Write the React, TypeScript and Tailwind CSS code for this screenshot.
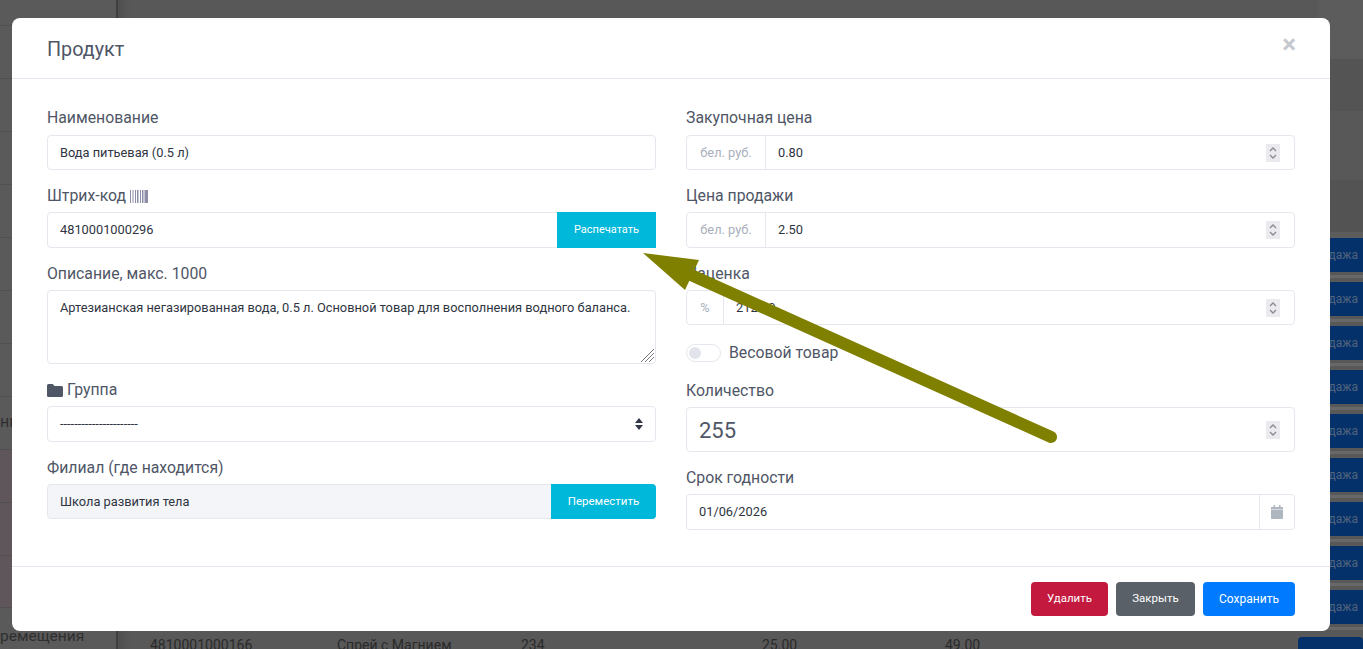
const sideLines = [26, 53, 53, 53, 53, 53, 53, 53, 53, 53, 53, 52];
const rightBands = [
  { h: 59, c: "bg-[#5c5c5c]" },
  { h: 52, c: "bg-[#545454]" },
  { h: 69, c: "bg-[#585858]" },
  { h: 52, c: "bg-[#535353]" },
];

function Label({ children }: { children: React.ReactNode }) {
  return <label className="block h-[18px] text-[15.8px] leading-[20px] text-[#4f5666]">{children}</label>;
}

function Stepper() {
  return (
    <span className="flex h-[18px] w-[14px] shrink-0 flex-col items-center justify-center gap-[2px] bg-[#eaeaef]">
      <svg width="8" height="5" viewBox="0 0 8 5" fill="none" stroke="#8a8a94" strokeWidth="1.3">
        <path d="M1 4l3-3 3 3" />
      </svg>
      <svg width="8" height="5" viewBox="0 0 8 5" fill="none" stroke="#8a8a94" strokeWidth="1.3">
        <path d="M1 1l3 3 3-3" />
      </svg>
    </span>
  );
}

function NumberField({ prefix, value, height, prefixWidth }: { prefix: string; value: string; height: string; prefixWidth: string }) {
  return (
    <div className={`flex ${height} items-center rounded border border-[#e4e7ed] text-[12.8px] text-[#2f3542]`}>
      <span className={`flex h-full ${prefixWidth} shrink-0 items-center justify-center border-r border-[#e4e7ed] text-[#a9b0bc]`}>{prefix}</span>
      <span className="flex-1 pl-3">{value}</span>
      <span className="pr-[14px]">
        <Stepper />
      </span>
    </div>
  );
}

export default function App() {
  return (
    <div className="relative h-[649px] w-[1363px] overflow-hidden bg-[#5a5a5a] font-['Roboto',sans-serif]">
      <div className="flex h-full">
        <aside className="h-full w-[118px] shrink-0 border-r-2 border-[#3f3f3f] bg-[#5a5a5a]">
          {sideLines.map((h, i) => (
            <div key={i} style={{ height: h }} className={`border-b border-[#505050] ${i > 8 ? "bg-[#5f565b]" : ""}`} />
          ))}
        </aside>
        <main className="flex-1 bg-gradient-to-r from-[#4f4f4f] via-[#585858] via-[1%] to-[#585858]">
          <div className="flex flex-col items-end">
            <div className="w-[45px]">
              {rightBands.map((b, i) => (
                <div key={i} style={{ height: b.h }} className={b.c} />
              ))}
              <div className="h-[6px] bg-[#5c5c5c]" />
            </div>
            {[0, 1, 2, 3, 4, 5, 6, 7, 8].map((i) => (
              <div key={i} className="h-[44px] w-[45px]">
                <div className="flex h-[34px] items-center bg-[#05316b] pl-[4px] text-[12px] text-[#52647c]">одажа</div>
                <div className="mt-[3px] h-[3px] bg-[#686868]" />
              </div>
            ))}
          </div>
        </main>
      </div>

      <span className="absolute left-0 top-[413px] text-[16px] leading-[18px] text-[#2f2f2f]">нг</span>
      <span className="absolute left-0 top-[627px] text-[15.5px] leading-[18px] text-[#2f2f2f]">ремещения</span>
      <div className="absolute left-[150px] top-[637px] flex text-[14px] leading-[16px] text-[#2a2a2a]">
        <span className="w-[187px]">4810001000166</span>
        <span className="w-[184px]">Спрей с Магнием</span>
        <span className="w-[241px]">234</span>
        <span className="w-[183px]">25.00</span>
        <span>49.00</span>
      </div>
      <div className="absolute left-[1298px] top-[637px] h-[12px] w-[65px] rounded-t bg-[#05316b]" />

      <section className="absolute left-[12px] top-[18px] h-[613px] w-[1318px] rounded-[8px] bg-white">
        <header className="flex h-[61px] items-start justify-between border-b border-[#e4e7ed] px-[35px] pt-[19px]">
          <h1 className="text-[19.8px] leading-[26px] text-[#4f5666]">Продукт</h1>
          <span className="mt-[-5px] translate-x-[1px] text-[26px] font-bold leading-[24px] text-[#c6c9d0]">×</span>
        </header>

        <div className="flex h-[487px] gap-[30px] px-[35px] pt-[29px]">
          <div className="w-[609px]">
            <Label>Наименование</Label>
            <div className="mt-[9px] flex h-[35px] items-center rounded border border-[#e4e7ed] px-3 text-[12.8px] text-[#2f3542]">Вода питьевая (0.5 л)</div>

            <div className="mt-[16px]">
              <Label>
                <span className="inline-flex items-center gap-[4px]">
                  Штрих-код
                  <svg width="18" height="13" viewBox="0 0 18 13" fill="#8d8fa8">
                    <path d="M0 0h1v13H0zM2.5 0h1v13h-1zM5 0h1v13H5zM7 0h1.5v13H7zM10 0h1v13h-1zM12 0h1.5v13H12zM14.5 0H18v13h-3.5z" />
                  </svg>
                </span>
              </Label>
            </div>
            <div className="mt-[8px] flex h-[36px] items-center rounded border border-[#e4e7ed] text-[12.8px] text-[#2f3542]">
              <span className="flex-1 pl-3">4810001000296</span>
              <button className="-mr-px h-[36px] w-[99px] bg-[#00b8d9] text-[11px] text-white">Распечатать</button>
            </div>

            <div className="mt-[16px]">
              <Label>Описание, макс. 1000</Label>
            </div>
            <div className="relative mt-[8px] h-[74px] rounded border border-[#e4e7ed] px-3 pt-[8px] text-[12.8px] leading-[18px] text-[#2f3542]">
              Артезианская негазированная вода, 0.5 л. Основной товар для восполнения водного баланса.
              <svg className="absolute bottom-[1px] right-[1px]" width="14" height="14" viewBox="0 0 14 14" stroke="#777" strokeWidth="1">
                <path d="M1 14L14 1M5 14l9-9M9 14l5-5" />
              </svg>
            </div>

            <div className="mt-[16px]">
              <Label>
                <span className="inline-flex items-center gap-[4px]">
                  <svg width="16" height="13" viewBox="0 0 16 13" fill="#4f5666">
                    <path d="M0 1.5A1.5 1.5 0 0 1 1.5 0h4.2L7.5 2h7A1.5 1.5 0 0 1 16 3.5v8a1.5 1.5 0 0 1-1.5 1.5h-13A1.5 1.5 0 0 1 0 11.5z" />
                  </svg>
                  Группа
                </span>
              </Label>
            </div>
            <div className="mt-[8px] flex h-[36px] items-center justify-between rounded border border-[#e4e7ed] pl-3 pr-[12px] text-[12.8px] text-[#2f3542]">
              <span>----------------------</span>
              <svg width="8" height="12" viewBox="0 0 8 12" fill="#333a45">
                <path d="M4 0l4 5H0zM4 12L0 7h8z" />
              </svg>
            </div>

            <div className="mt-[16px]">
              <Label>Филиал (где находится)</Label>
            </div>
            <div className="mt-[8px] flex h-[35px] items-center rounded border border-[#e4e7ed] bg-[#f4f5f8] text-[12.8px] text-[#2f3542]">
              <span className="flex-1 pl-3">Школа развития тела</span>
              <button className="-mr-px h-[35px] w-[105px] rounded-r bg-[#00b8d9] text-[11.5px] text-white">Переместить</button>
            </div>
          </div>

          <div className="w-[609px]">
            <Label>Закупочная цена</Label>
            <div className="mt-[9px]">
              <NumberField prefix="бел. руб." value="0.80" height="h-[35px]" prefixWidth="w-[79px]" />
            </div>
            <div className="mt-[16px]">
              <Label>Цена продажи</Label>
            </div>
            <div className="mt-[8px]">
              <NumberField prefix="бел. руб." value="2.50" height="h-[36px]" prefixWidth="w-[79px]" />
            </div>
            <div className="mt-[16px]">
              <Label>Наценка</Label>
            </div>
            <div className="mt-[8px]">
              <NumberField prefix="%" value="212.50" height="h-[35px]" prefixWidth="w-[37px]" />
            </div>
            <div className="mt-[19px] flex h-[18px] items-center gap-[8px]">
              <span className="flex h-[18px] w-[35px] items-center rounded-full border border-[#e4e7ed] pl-[2px]">
                <span className="h-[12px] w-[12px] rounded-full bg-[#e1e4ea]" />
              </span>
              <span className="text-[15.8px] leading-[20px] text-[#4f5666]">Весовой товар</span>
            </div>
            <div className="mt-[19px]">
              <Label>Количество</Label>
            </div>
            <div className="mt-[8px] flex h-[45px] items-center justify-between rounded border border-[#e4e7ed] pl-3 pr-[14px] text-[22px] text-[#4f5666]">
              <span className="pt-[2px]">255</span>
              <Stepper />
            </div>
            <div className="mt-[16px]">
              <Label>Срок годности</Label>
            </div>
            <div className="mt-[8px] flex h-[36px] items-center rounded border border-[#e4e7ed] text-[12.8px] text-[#2f3542]">
              <span className="flex-1 pl-3">01/06/2026</span>
              <span className="flex h-full w-[35px] items-center justify-center border-l border-[#e4e7ed]">
                <svg width="12" height="14" viewBox="0 0 12 14" fill="#aeb6c0">
                  <path d="M2.5 0h1.5v2H2.5zM8 0h1.5v2H8zM0 2h12v2.5H0zM0 5h12v8a1 1 0 0 1-1 1H1a1 1 0 0 1-1-1z" />
                </svg>
              </span>
            </div>
          </div>
        </div>

        <footer className="flex h-[65px] items-start justify-end gap-[8px] border-t border-[#e4e7ed] px-[35px] pt-[15px] text-[11.5px] text-white">
          <button className="h-[34px] w-[77px] rounded bg-[#c4193f]">Удалить</button>
          <button className="h-[34px] w-[79px] rounded bg-[#5a6068]">Закрыть</button>
          <button className="h-[34px] w-[92px] rounded bg-[#007bff] text-[12px]">Сохранить</button>
        </footer>
      </section>

      <svg className="pointer-events-none absolute left-0 top-0" width="1363" height="649" fill="#808000" stroke="none">
        <path d="M643 253L699 260L685 290Z" />
        <path d="M1051 437L691 275" stroke="#808000" strokeWidth="12" strokeLinecap="round" />
      </svg>
    </div>
  );
}
